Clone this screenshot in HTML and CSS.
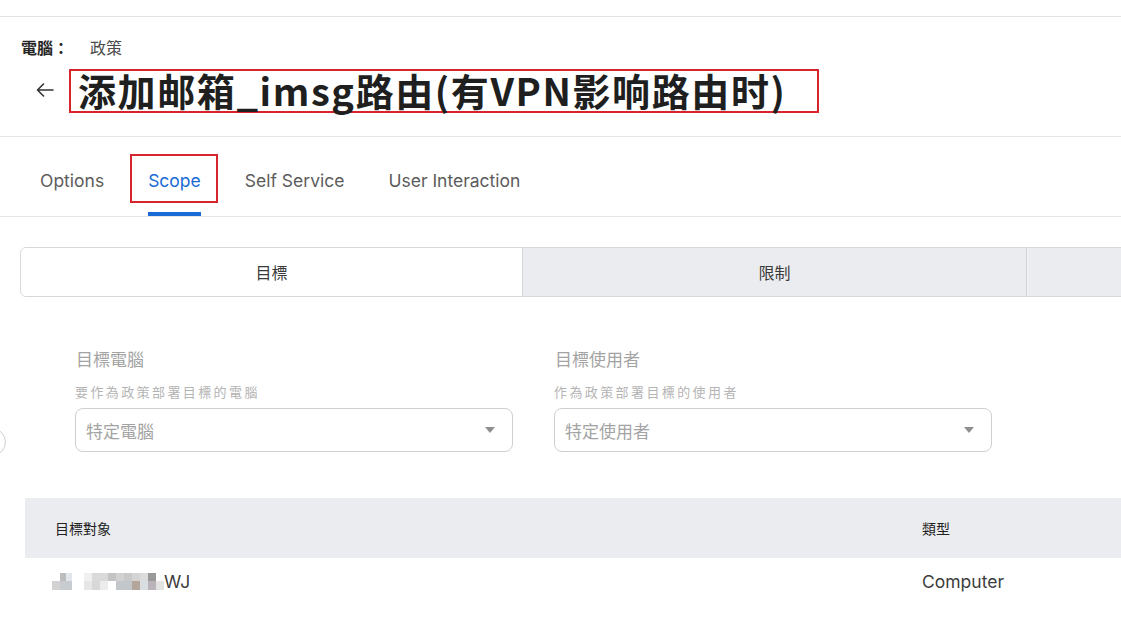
FILE: index.html
```html
<!DOCTYPE html>
<html lang="zh-Hant">
<head>
<meta charset="utf-8">
<title>Scope</title>
<link rel="stylesheet" href="styles.css">
</head>
<body>
<div class="topbar"></div>
<header class="header">
  <div class="crumb"><span class="crumb-root">電腦：</span><span class="crumb-leaf">政策</span></div>
  <div class="title-row">
    <svg class="back" width="18" height="14" viewBox="0 0 18 14"><path d="M17 7H1.5M7.5 1L1.5 7l6 6" fill="none" stroke="#333" stroke-width="1.6" stroke-linecap="round" stroke-linejoin="round"/></svg>
    <h1 class="title">添加邮箱_imsg路由(有VPN影响路由时)</h1>
  </div>
</header>
<nav class="tabs">
  <div class="tab">Options</div>
  <div class="tab active">Scope</div>
  <div class="tab">Self Service</div>
  <div class="tab">User Interaction</div>
</nav>
<div class="segment">
  <div class="seg seg-on">目標</div>
  <div class="seg seg-mid">限制</div>
  <div class="seg seg-last"></div>
</div>
<section class="form">
  <div class="edge-circle"></div>
  <div class="field">
    <div class="label">目標電腦</div>
    <div class="desc">要作為政策部署目標的電腦</div>
    <div class="select"><span>特定電腦</span><i class="caret"></i></div>
  </div>
  <div class="field">
    <div class="label">目標使用者</div>
    <div class="desc">作為政策部署目標的使用者</div>
    <div class="select"><span>特定使用者</span><i class="caret"></i></div>
  </div>
</section>
<section class="table">
  <div class="thead">
    <div class="cell c1">目標對象</div>
    <div class="cell c2">類型</div>
  </div>
  <div class="trow">
    <div class="cell c1 name">
      <svg class="mosaic" width="112" height="17" viewBox="0 0 112 17">
        <rect x="8" y="0" width="6" height="8" fill="#bdbdbd"/>
        <rect x="14" y="0" width="6" height="8" fill="#e3e6ea"/>
        <rect x="32" y="0" width="8" height="8" fill="#f0f0f0"/>
        <rect x="40" y="0" width="16" height="8" fill="#dadada"/>
        <rect x="56" y="0" width="8" height="8" fill="#c4c4c4"/>
        <rect x="64" y="0" width="8" height="8" fill="#d2d2d2"/>
        <rect x="72" y="0" width="8" height="8" fill="#c9c9c9"/>
        <rect x="80" y="0" width="8" height="8" fill="#d4d4d4"/>
        <rect x="88" y="0" width="8" height="8" fill="#dcdcdc"/>
        <rect x="96" y="0" width="8" height="8" fill="#9a9a9a"/>
        <rect x="0" y="8" width="8" height="9" fill="#d2d2d2"/>
        <rect x="8" y="8" width="12" height="9" fill="#c8ccd0"/>
        <rect x="32" y="8" width="8" height="9" fill="#e6e6e6"/>
        <rect x="40" y="8" width="8" height="9" fill="#d8d8d8"/>
        <rect x="48" y="8" width="8" height="9" fill="#ececec"/>
        <rect x="64" y="8" width="16" height="9" fill="#c3c6ca"/>
        <rect x="80" y="8" width="8" height="9" fill="#b4a69c"/>
        <rect x="88" y="8" width="8" height="9" fill="#dadde1"/>
        <rect x="96" y="8" width="8" height="9" fill="#bab3ba"/>
        <rect x="104" y="8" width="8" height="9" fill="#e2e2e2"/>
      </svg><span>WJ</span>
    </div>
    <div class="cell c2">Computer</div>
  </div>
</section>
</body>
</html>
```
FILE: styles.css
```css
html, body {
  margin: 0;
  padding: 0;
  background: #fff;
  overflow: hidden;
}
body {
  width: 1121px;
  height: 641px;
  font-family: Inter, "Noto Sans CJK TC", "Noto Sans CJK SC", sans-serif;
  color: #333;
}
.topbar {
  height: 16px;
  border-bottom: 1px solid #e2e2e2;
}
.header {
  border-bottom: 1px solid #e6e6e6;
  padding-bottom: 23px;
}
.crumb {
  margin-top: 19px;
  padding-left: 21px;
  font-size: 16px;
  line-height: 22px;
  font-family: "Noto Sans CJK TC", sans-serif;
}
.crumb-root {
  color: #262626;
  font-weight: 700;
  margin-right: 21px;
}
.crumb-leaf {
  color: #4a4a4a;
}
.title-row {
  display: flex;
  align-items: center;
  margin-top: 11px;
  padding-left: 36px;
  gap: 15px;
}
.back {
  display: block;
  margin-top: -2px;
}
.title {
  margin: 0;
  box-sizing: border-box;
  width: 750px;
  height: 44px;
  border: 2px solid #d8242d;
  padding: 0 0 0 7px;
  font-family: "Noto Sans CJK SC", sans-serif;
  font-weight: 700;
  font-size: 38px;
  line-height: 38px;
  color: #1f1f1f;
  white-space: nowrap;
  letter-spacing: 1.6px;
}
.tabs {
  display: flex;
  gap: 44px;
  padding-left: 40px;
  height: 79px;
  border-bottom: 1px solid #e6e6e6;
}
.tab {
  position: relative;
  box-sizing: border-box;
  height: 79px;
  padding-top: 32px;
  line-height: 24px;
  font-size: 17.5px;
  color: #5c5c5c;
  border-bottom: 4px solid transparent;
}
.tab.active {
  color: #1a6ad6;
  border-bottom-color: #1a6ad6;
}
.tab.active::after {
  content: "";
  position: absolute;
  left: -18px;
  right: -17px;
  top: 17px;
  height: 49px;
  border: 2px solid #d8242d;
  box-sizing: border-box;
}
.segment {
  display: flex;
  margin: 30px 0 0 20px;
  width: 1200px;
  height: 50px;
  box-sizing: border-box;
  border: 1px solid #d6d7da;
  border-radius: 6px;
  overflow: hidden;
  font-family: "Noto Sans CJK TC", sans-serif;
  font-size: 16px;
  color: #3a3a3a;
}
.seg {
  display: flex;
  align-items: center;
  justify-content: center;
}
.seg-on {
  width: 501px;
  background: #fff;
}
.seg-mid {
  width: 503px;
  background: #ebecef;
  border-left: 1px solid #d6d7da;
  border-right: 1px solid #d2d3d6;
}
.seg-last {
  flex: 1;
  background: #ebecef;
  border-left: 1px solid #f4f4f6;
}
.form {
  position: relative;
  display: flex;
  gap: 41px;
  padding-left: 75px;
  margin-top: 50px;
  font-family: "Noto Sans CJK TC", sans-serif;
}
.edge-circle {
  position: absolute;
  left: -22px;
  top: 81px;
  width: 26px;
  height: 26px;
  border: 1px solid #cfcfcf;
  border-radius: 50%;
}
.field {
  width: 438px;
}
.label {
  font-size: 17px;
  line-height: 24px;
  color: #a3a3a3;
  padding-left: 1px;
}
.desc {
  margin-top: 11px;
  font-size: 13px;
  line-height: 20px;
  letter-spacing: 2.4px;
  color: #b4b4b4;
}
.select {
  margin-top: 6px;
  box-sizing: border-box;
  height: 44px;
  border: 1px solid #cfcfcf;
  border-radius: 8px;
  display: flex;
  align-items: center;
  justify-content: space-between;
  padding: 0 17px 0 10px;
  font-size: 17px;
  color: #a3a3a3;
}
.caret {
  width: 0;
  height: 0;
  border-left: 5px solid transparent;
  border-right: 5px solid transparent;
  border-top: 6px solid #8f8f8f;
}
.table {
  margin: 46px 0 0 25px;
}
.thead {
  display: flex;
  height: 60px;
  align-items: center;
  background: #ebecef;
  font-family: "Noto Sans CJK TC", sans-serif;
  font-size: 14px;
  color: #222;
}
.trow {
  display: flex;
  height: 46px;
  align-items: center;
  font-size: 17.5px;
  color: #3c3c3c;
}
.c1 {
  width: 897px;
  box-sizing: border-box;
  padding-left: 30px;
}
.trow .c1 {
  padding-left: 27px;
}
.name {
  display: flex;
  align-items: center;
}
.mosaic {
  display: block;
}
```
